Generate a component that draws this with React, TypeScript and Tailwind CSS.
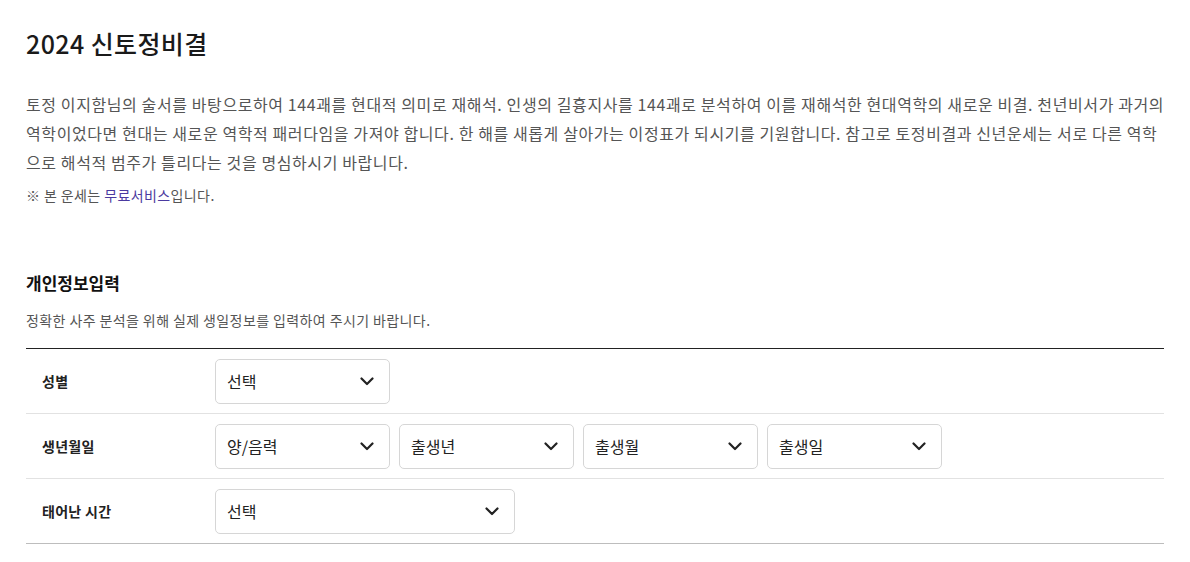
const font = { fontFamily: '"Noto Sans CJK KR", "Noto Sans", sans-serif' };

function Chevron() {
  return (
    <svg width="14" height="9" viewBox="0 0 14 9" fill="none">
      <path d="M1.5 1.5 7 7l5.5-5.5" stroke="#222" strokeWidth="2.2" strokeLinecap="round" strokeLinejoin="round" />
    </svg>
  );
}

function Select({ label, width }: { label: string; width: string }) {
  return (
    <div
      className={`${width} h-[45px] flex flex-row items-center justify-between pl-[11px] pr-[15px] bg-white border border-[#d6d6d6] rounded-[5px] text-[16px] text-[#222]`}
    >
      <span>{label}</span>
      <Chevron />
    </div>
  );
}

function Row({ title, children, last }: { title: string; children: React.ReactNode; last?: boolean }) {
  return (
    <div className={`h-[65px] flex flex-row items-center border-b ${last ? "border-[#bdbdbd]" : "border-[#e2e2e2]"}`}>
      <div className="w-[189px] pl-[16px] text-[14px] font-bold text-[#222] tracking-[0.3px]">{title}</div>
      <div className="flex flex-row gap-[9px]">{children}</div>
    </div>
  );
}

export default function App() {
  return (
    <div className="w-[1190px] h-[562px] bg-white px-[26px] pt-[25px]" style={font}>
      <h1 className="text-[25px] leading-[36px] text-[#1a1a1a] font-medium tracking-[0.4px]">2024 신토정비결</h1>

      <p className="mt-[29px] text-[16px] leading-[29px] text-[#555] tracking-[0.6px] whitespace-nowrap">
        토정 이지함님의 술서를 바탕으로하여 144괘를 현대적 의미로 재해석. 인생의 길흉지사를 144괘로 분석하여 이를 재해석한 현대역학의 새로운 비결. 천년비서가 과거의
        <br />
        역학이었다면 현대는 새로운 역학적 패러다임을 가져야 합니다. 한 해를 새롭게 살아가는 이정표가 되시기를 기원합니다. 참고로 토정비결과 신년운세는 서로 다른 역학
        <br />
        으로 해석적 범주가 틀리다는 것을 명심하시기 바랍니다.
      </p>
      <p className="mt-[8px] text-[14px] leading-[20px] text-[#555] tracking-[0.4px]">
        ※ 본 운세는 <span className="text-[#4b3aa0]">무료서비스</span>입니다.
      </p>

      <h2 className="mt-[65px] text-[17px] leading-[26px] font-bold text-[#111]">개인정보입력</h2>
      <p className="mt-[14px] text-[14px] leading-[20px] text-[#555] tracking-[0.4px]">정확한 사주 분석을 위해 실제 생일정보를 입력하여 주시기 바랍니다.</p>

      <div className="mt-[18px] border-t border-[#222]">
        <Row title="성별">
          <Select label="선택" width="w-[175px]" />
        </Row>
        <Row title="생년월일">
          <Select label="양/음력" width="w-[175px]" />
          <Select label="출생년" width="w-[175px]" />
          <Select label="출생월" width="w-[175px]" />
          <Select label="출생일" width="w-[175px]" />
        </Row>
        <Row title="태어난 시간" last>
          <Select label="선택" width="w-[300px]" />
        </Row>
      </div>
    </div>
  );
}
